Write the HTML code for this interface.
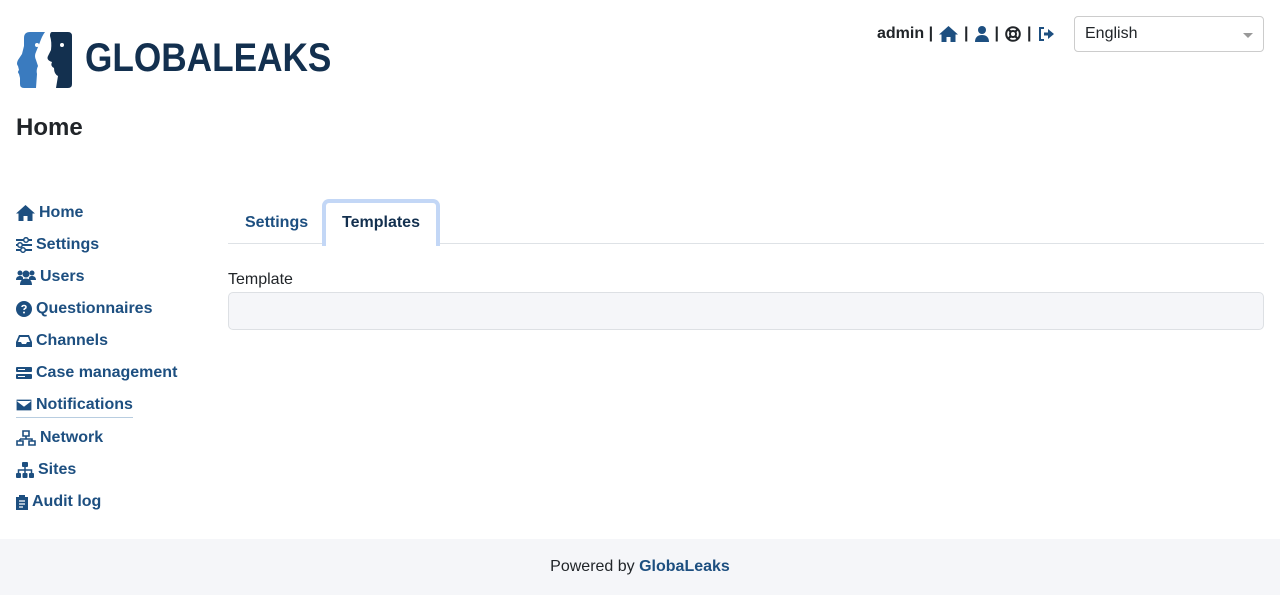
<!DOCTYPE html>
<html><head><meta charset="utf-8"><style>
*{box-sizing:border-box}
body{margin:0;width:1280px;height:595px;font-family:"Liberation Sans",sans-serif;color:#212529;background:#fff;position:relative;overflow:hidden}
.c{color:#1d4f80}
.nav a{position:absolute;left:16px;font-weight:bold;font-size:16px;color:#1d4f80;display:flex;align-items:center;gap:4px;text-decoration:none;line-height:20px}
.nav svg{fill:#1d4f80}
</style></head><body>
<svg style="position:absolute;left:16px;top:32px" width="58" height="57" viewBox="0 0 58 57">
<path d="M14 0H29Q26 4 24 10L20 20Q18 24 20 28L22 34Q20 38 21 42L20 56H8Q4 56 4 52V46L3 42Q1 40 3 38L2 34Q0 32 2 28L6 22Q7 18 8 14V6Q8 0 14 0Z" fill="#3a7bbf"/>
<path d="M36 0H52Q56 0 56 4V52Q56 56 52 56H40L42 44Q38 42 38 36Q34 34 36 30Q30 28 32 24L35 18Q36 10 34 4Q34 0 36 0Z" fill="#13304f"/>
<circle cx="21" cy="13" r="2" fill="#fff"/><circle cx="46" cy="13" r="2" fill="#fff"/>
</svg>
<div style="position:absolute;left:85px;top:38px;font-size:40px;font-weight:bold;color:#13304f;line-height:40px;transform:scaleX(0.88);transform-origin:left">GLOBALEAKS</div>
<div style="position:absolute;left:877px;top:24px;font-weight:bold;font-size:16px;display:flex;align-items:center;gap:6px;line-height:20px">admin |
<svg width="19" height="16" viewBox="0 0 19 16"><path d="M9.5 0L19 8.5H16.5V16H11.5V11H7.5V16H2.5V8.5H0Z" fill="#1d4f80"/></svg> |
<svg width="14" height="16" viewBox="0 0 14 16"><circle cx="7" cy="4" r="4" fill="#1d4f80"/><path d="M0 16C0 11 3 9 7 9S14 11 14 16Z" fill="#1d4f80"/></svg> |
<svg width="16" height="16" viewBox="0 0 16 16"><circle cx="8" cy="8" r="6.8" fill="none" stroke="#212529" stroke-width="2"/><circle cx="8" cy="8" r="3" fill="none" stroke="#212529" stroke-width="2"/><path d="M3 3L5.8 5.8M13 3L10.2 5.8M3 13L5.8 10.2M13 13L10.2 10.2" stroke="#212529" stroke-width="2.2"/></svg> |
<svg width="17" height="16" viewBox="0 0 17 16"><path d="M6 2H2V14H6" fill="none" stroke="#1d4f80" stroke-width="2"/><path d="M6 6.5H10V3L16 8 10 13V9.5H6Z" fill="#1d4f80"/></svg></div>
<div style="position:absolute;left:1074px;top:16px;width:190px;height:36px;border:1px solid #ccc;border-radius:4px;padding:8px 10px;font-size:16px;line-height:18px">English<span style="position:absolute;right:10px;top:16px;border:5px solid transparent;border-top-color:#999"></span></div>
<div style="position:absolute;left:16px;top:114px;font-size:24px;font-weight:bold;line-height:28px">Home</div>
<div class="nav">
<a style="top:203px"><svg width="19" height="16" viewBox="0 0 19 16"><path d="M9.5 0L19 8.5H16.5V16H11.5V11H7.5V16H2.5V8.5H0Z"/></svg>Home</a>
<a style="top:235px"><svg width="16" height="16" viewBox="0 0 16 16"><path d="M0 2h16v2H0zM0 7h16v2H0zM0 12h16v2H0z"/><circle cx="10" cy="3" r="2.3" fill="#fff" stroke="#1d4f80" stroke-width="1.5"/><circle cx="4" cy="8" r="2.3" fill="#fff" stroke="#1d4f80" stroke-width="1.5"/><circle cx="7" cy="13" r="2.3" fill="#fff" stroke="#1d4f80" stroke-width="1.5"/></svg>Settings</a>
<a style="top:267px"><svg width="20" height="16" viewBox="0 0 20 16"><circle cx="4" cy="4" r="2.5"/><circle cx="16" cy="4" r="2.5"/><circle cx="10" cy="5" r="3.5"/><path d="M0 11C0 8 2 7 4 7S7 8 7 9V11ZM13 9C13 8 14 7 16 7S20 8 20 11H13ZM4 16C4 11 7 9.5 10 9.5S16 11 16 16Z"/></svg>Users</a>
<a style="top:299px"><svg width="16" height="16" viewBox="0 0 16 16"><circle cx="8" cy="8" r="8"/><path d="M6 6C6 4 10 4 10 6S8 7 8 9" stroke="#fff" stroke-width="1.6" fill="none"/><circle cx="8" cy="11.5" r="1" fill="#fff"/></svg>Questionnaires</a>
<a style="top:331px"><svg width="16" height="16" viewBox="0 0 16 16"><path d="M3 2H13L16 9V14H0V9ZM4 4L2 9H5L6 11H10L11 9H14L12 4Z" fill-rule="evenodd"/></svg>Channels</a>
<a style="top:363px"><svg width="16" height="16" viewBox="0 0 16 16"><rect y="2" width="16" height="5" rx="1"/><rect y="9" width="16" height="5" rx="1"/><path d="M2 4h7v1H2zM2 11h7v1H2z" fill="#fff"/></svg>Case management</a>
<a style="top:395px;padding-bottom:2px;border-bottom:1px solid #b8cde0"><svg width="16" height="16" viewBox="0 0 16 16"><path d="M0 2H16V14H0ZM1.5 4L8 9 14.5 4" fill="#1d4f80" stroke="#fff" stroke-width="1.2"/></svg>Notifications</a>
<a style="top:428px"><svg width="20" height="16" viewBox="0 0 20 16"><path d="M7 1h6v5H7zM1 11h6v4H1zM13 11h6v4h-6zM10 6v3M4 9h12v2M4 9v2" fill="none" stroke="#1d4f80" stroke-width="1.6"/></svg>Network</a>
<a style="top:460px"><svg width="18" height="16" viewBox="0 0 18 16"><rect x="6" y="0" width="6" height="5" rx="1"/><rect x="0" y="11" width="5" height="5" rx="1"/><rect x="6.5" y="11" width="5" height="5" rx="1"/><rect x="13" y="11" width="5" height="5" rx="1"/><path d="M9 5v6M2.5 11V8h13v3" fill="none" stroke="#1d4f80" stroke-width="1.5"/></svg>Sites</a>
<a style="top:492px"><svg width="12" height="16" viewBox="0 0 12 16"><path d="M0 3H3V1H9V3H12V16H0Z"/><path d="M3 7h6M3 10h6M3 13h4" stroke="#fff" stroke-width="1.2"/></svg>Audit log</a>
</div>
<div style="position:absolute;left:228px;top:243px;width:1036px;border-top:1px solid #dee2e6"></div>
<div style="position:absolute;left:245px;top:213px;font-weight:bold;font-size:16px;color:#1d4f80;line-height:20px">Settings</div>
<div style="position:absolute;left:322px;top:199px;width:118px;height:47px;border:4px solid #c3d7f6;border-bottom:none;border-radius:7px 7px 0 0;background:#fff;text-align:center;padding-top:10px;font-weight:bold;font-size:16px;color:#13304f;line-height:20px">Templates</div>
<div style="position:absolute;left:228px;top:270px;font-size:16px;line-height:20px">Template</div>
<div style="position:absolute;left:228px;top:292px;width:1036px;height:38px;background:#f5f6f9;border:1px solid #dde0e4;border-radius:5px"></div>
<div style="position:absolute;left:0;top:539px;width:1280px;height:56px;background:#f5f6f9;text-align:center;padding-top:18px;font-size:16px;line-height:20px">Powered by <b class="c">GlobaLeaks</b></div>
</body></html>
